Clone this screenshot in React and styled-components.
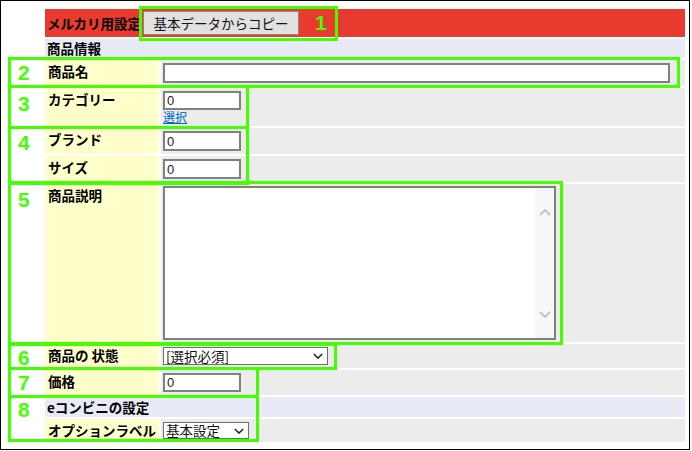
import React from "react";
import styled, { createGlobalStyle } from "styled-components";

const Global = createGlobalStyle`
  html, body { margin: 0; padding: 0; background: #f6f8fc; }
  body { font-family: "Noto Sans CJK JP", "Noto Sans", sans-serif; }
  * { box-sizing: border-box; }
`;

const Frame = styled.div`
  position: relative;
  width: 690px;
  height: 450px;
  border: 1px solid #000;
  background: #fff;
  padding: 8px 4px 0 44px;
`;

const FormGrid = styled.div`
  display: grid;
  grid-template-columns: 114px 1fr;
  grid-template-rows: 28px 19px 26px 38px 26px 26px 158px 24px 25px 20px 23px;
  gap: 2px;
  font-size: 13.5px;
  line-height: 15px;
  color: #000;
`;

const HeaderBar = styled.div`
  grid-column: 1 / -1;
  background: #e93a2f;
  display: flex;
  align-items: center;
  padding-left: 2px;
  font-weight: bold;
`;

const CopyButton = styled.button`
  margin-left: 2px;
  width: 156px;
  height: 24px;
  background: #e1e1e1;
  border: 1px solid #8a8a8a;
  font-family: inherit;
  font-size: 13.5px;
  color: #111;
  padding: 0;
`;

const SectionBar = styled.div`
  grid-column: 1 / -1;
  background: #e8ebf6;
  display: flex;
  align-items: center;
  padding-left: 2px;
  font-weight: bold;
`;

const LabelCell = styled.div`
  background: #ffffcc;
  padding: 4px 3px;
  font-weight: bold;
`;

const ValueCell = styled.div`
  background: #ececec;
  padding: ${(p) => p.$pad || "3px 2px"};
  display: flex;
  flex-direction: column;
  align-items: flex-start;
`;

const TextInput = styled.input`
  width: ${(p) => p.$w}px;
  height: 21px;
  border: 2px solid #808080;
  border-radius: 0;
  background: #fff;
  padding: 0 2px;
  font-family: "Liberation Sans", sans-serif;
  font-size: 13px;
  color: #222;
  outline: none;
`;

const SelectLink = styled.a`
  color: #0066cc;
  text-decoration: underline;
  font-size: 12px;
  line-height: 12px;
  margin-top: 1px;
  cursor: pointer;
`;

const TextAreaBox = styled.div`
  width: 393px;
  height: 154px;
  border: 2px solid #808080;
  background: #fff;
  display: flex;
`;

const PlainTextArea = styled.textarea`
  flex: 1;
  border: none;
  resize: none;
  outline: none;
  background: #fff;
`;

const ScrollTrack = styled.div`
  width: 19px;
  background: #f7f7f7;
  display: flex;
  flex-direction: column;
  justify-content: space-between;
  align-items: center;
  padding: 21px 0 20px;
`;

const SelectBox = styled.div`
  width: ${(p) => p.$w}px;
  height: ${(p) => p.$h}px;
  border: 1px solid #6e6e6e;
  background: #fff;
  display: flex;
  align-items: center;
  justify-content: space-between;
  padding: 0 4px 0 2px;
  font-size: 13.5px;
  color: #111;
`;

const AnnotBox = styled.div`
  position: absolute;
  left: ${(p) => p.$x - 1}px;
  top: ${(p) => p.$y - 1}px;
  width: ${(p) => p.$w}px;
  height: ${(p) => p.$h}px;
  border: 3px solid #44ff00;
  pointer-events: none;
`;

const AnnotNum = styled.div`
  position: absolute;
  left: ${(p) => p.$x - 1}px;
  top: ${(p) => p.$y - 4}px;
  font-family: "Liberation Sans", Arial, sans-serif;
  font-weight: bold;
  font-size: 21px;
  line-height: 21px;
  color: #44ff00;
`;

const Chevron = ({ up, color, w = 12, h = 7, sw = 2 }) => (
  <svg width={w} height={h} viewBox="0 0 12 7">
    <polyline
      points={up ? "1,6 6,1 11,6" : "1,1 6,6 11,1"}
      fill="none"
      stroke={color}
      strokeWidth={sw}
    />
  </svg>
);

const boxes = [
  { x: 139, y: 6, w: 199, h: 35 },
  { x: 8, y: 57, w: 672, h: 31 },
  { x: 8, y: 85, w: 241, h: 44 },
  { x: 8, y: 126, w: 241, h: 59 },
  { x: 8, y: 181, w: 555, h: 164 },
  { x: 8, y: 343, w: 329, h: 27 },
  { x: 8, y: 367, w: 251, h: 31 },
  { x: 8, y: 395, w: 251, h: 47 },
];

const nums = [
  { n: "1", x: 315, y: 15 },
  { n: "2", x: 18, y: 65 },
  { n: "3", x: 18, y: 96 },
  { n: "4", x: 18, y: 135 },
  { n: "5", x: 18, y: 192 },
  { n: "6", x: 18, y: 350 },
  { n: "7", x: 18, y: 375 },
  { n: "8", x: 18, y: 402 },
];

export default function App() {
  return (
    <>
      <Global />
      <Frame>
        <FormGrid>
          <HeaderBar>
            メルカリ用設定
            <CopyButton>基本データからコピー</CopyButton>
          </HeaderBar>
          <SectionBar>商品情報</SectionBar>

          <LabelCell>商品名</LabelCell>
          <ValueCell>
            <TextInput $w={507} defaultValue="" />
          </ValueCell>

          <LabelCell>カテゴリー</LabelCell>
          <ValueCell>
            <TextInput $w={78} defaultValue="0" />
            <SelectLink>選択</SelectLink>
          </ValueCell>

          <LabelCell>ブランド</LabelCell>
          <ValueCell>
            <TextInput $w={78} defaultValue="0" />
          </ValueCell>

          <LabelCell>サイズ</LabelCell>
          <ValueCell>
            <TextInput $w={78} defaultValue="0" />
          </ValueCell>

          <LabelCell>商品説明</LabelCell>
          <ValueCell $pad="2px 2px">
            <TextAreaBox>
              <PlainTextArea />
              <ScrollTrack>
                <Chevron up color="#c4c4c4" />
                <Chevron color="#c4c4c4" />
              </ScrollTrack>
            </TextAreaBox>
          </ValueCell>

          <LabelCell>商品の 状態</LabelCell>
          <ValueCell>
            <SelectBox $w={165} $h={19}>
              <span>[選択必須]</span>
              <Chevron color="#222" w={10} h={6} sw={1.8} />
            </SelectBox>
          </ValueCell>

          <LabelCell>価格</LabelCell>
          <ValueCell>
            <TextInput $w={78} defaultValue="0" />
          </ValueCell>

          <SectionBar>eコンビニの設定</SectionBar>

          <LabelCell>オプションラベル</LabelCell>
          <ValueCell>
            <SelectBox $w={86} $h={18}>
              <span>基本設定</span>
              <Chevron color="#222" w={10} h={6} sw={1.8} />
            </SelectBox>
          </ValueCell>
        </FormGrid>

        {boxes.map((b, i) => (
          <AnnotBox key={i} $x={b.x} $y={b.y} $w={b.w} $h={b.h} />
        ))}
        {nums.map((n) => (
          <AnnotNum key={n.n} $x={n.x} $y={n.y}>
            {n.n}
          </AnnotNum>
        ))}
      </Frame>
    </>
  );
}
